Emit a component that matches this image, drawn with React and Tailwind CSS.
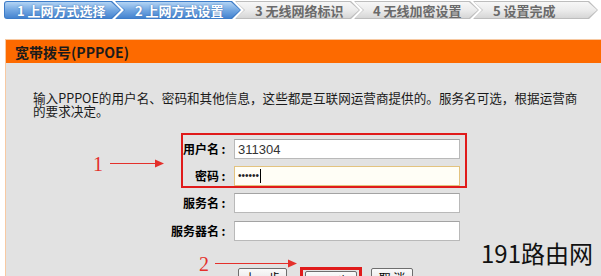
import React from "react";

const SHAPE_FIRST =
  "[clip-path:polygon(0_0,calc(100%_-_9px)_0,100%_50%,calc(100%_-_9px)_100%,0_100%)]";
const SHAPE =
  "[clip-path:polygon(0_0,calc(100%_-_9px)_0,100%_50%,calc(100%_-_9px)_100%,0_100%,9px_50%)]";

function Tab({ label, active, first, w, ml, pl }) {
  const shape = first ? SHAPE_FIRST : SHAPE;
  return (
    <div
      className={`${shape} ${w} ${ml} h-[18px] p-[1px] ${
        active ? "bg-[#3d7cc8]" : "bg-[#bdbdbd]"
      } ${first ? "rounded-l-[3px]" : ""}`}
    >
      <div
        className={`${shape} h-full w-full flex items-center ${pl} ${
          active
            ? "bg-gradient-to-b from-[#b4d4f4] via-[#74a8e2] to-[#4584d0] text-white [text-shadow:0_0_2px_#3a6fb0]"
            : "bg-gradient-to-b from-[#f7f7f7] via-[#ececec] to-[#d6d6d6] text-[#6a6a6a]"
        } ${first ? "rounded-l-[2px]" : ""} text-[13px] font-bold whitespace-nowrap leading-none`}
      >
        {label}
      </div>
    </div>
  );
}

function Field({ children, focus }) {
  return (
    <div
      className={`w-[226px] h-[20px] border flex items-center pl-[3px] ${
        focus
          ? "border-[#e3c37f] bg-[#fffef6]"
          : "border-[#b9b9b9] border-t-[#a3a3a3] bg-white"
      }`}
    >
      {children}
    </div>
  );
}

function Row({ label, children }) {
  return (
    <div className="flex items-center">
      <div className="w-[45px] flex justify-end items-center mr-[6px]">
        <span className="shrink-0 whitespace-nowrap text-[12px] font-bold text-black leading-none">
          {label}
        </span>
        <span className="shrink-0 w-[9px] text-center text-[12px] font-bold text-black leading-none">
          :
        </span>
      </div>
      {children}
    </div>
  );
}

function Btn({ children, w }) {
  return (
    <div
      className={`${w} h-[22px] border border-[#6e6e6e] rounded-[2px] bg-gradient-to-b from-[#fafafa] to-[#dcdcdc] flex justify-center pt-[3px] text-[12px] text-black leading-none`}
    >
      {children}
    </div>
  );
}

export default function App() {
  return (
    <div
      className="relative w-[601px] h-[276px] overflow-hidden bg-white"
      style={{ fontFamily: '"Noto Sans CJK SC", "Liberation Sans", sans-serif' }}
    >
      {/* step bar */}
      <div className="flex pt-[1px] pl-[4px]">
        <Tab label="1 上网方式选择" active first w="w-[117px]" ml="" pl="pl-[12px]" />
        <Tab label="2 上网方式设置" active w="w-[126px]" ml="-ml-[6px]" pl="pl-[19px]" />
        <Tab label="3 无线网络标识" w="w-[125px]" ml="-ml-[6px]" pl="pl-[19px]" />
        <Tab label="4 无线加密设置" w="w-[125px]" ml="-ml-[6px]" pl="pl-[18px]" />
        <Tab label="5 设置完成" w="w-[125px]" ml="-ml-[6px]" pl="pl-[19px]" />
      </div>

      {/* panel */}
      <div className="ml-[5px] mt-[20px] w-[600px] border border-[#f7c9a2] border-r-0">
        <div className="h-[23px] bg-[#fd6a00] flex items-center pl-[9px] text-[14px] font-bold text-[#1b1b1b] leading-none">
          宽带拨号(PPPOE)
        </div>
        <div className="bg-[#e2e2e2] h-[240px] pt-[28px]">
          <p className="pl-[27px] text-[12.6px] leading-[13px] text-[#1a1a1a]">
            输入PPPOE的用户名、密码和其他信息，这些都是互联网运营商提供的。服务名可选，根据运营商
            <br />
            的要求决定。
          </p>

          <div className="ml-[175px] mt-[16px] flex flex-col items-start">
            <div className="border-2 border-[#e01b1b] pt-[4px] pr-[5px] flex flex-col gap-[7px]">
              <Row label="用户名">
                <Field>
                  <span className="text-[13px] text-[#333] leading-none" style={{ fontFamily: '"Liberation Sans", sans-serif' }}>
                    311304
                  </span>
                </Field>
              </Row>
              <Row label="密码">
                <Field focus>
                  <span className="text-[10px] text-[#222] leading-none" style={{ fontFamily: '"Liberation Sans", sans-serif' }}>
                    ••••••
                  </span>
                  <span className="ml-[1px] w-[1px] h-[14px] bg-black" />
                </Field>
              </Row>
            </div>
            <div className="pl-[2px] mt-[5px] flex flex-col gap-[8px]">
              <Row label="服务名">
                <Field />
              </Row>
              <Row label="服务器名">
                <Field />
              </Row>
            </div>
          </div>

          <div className="ml-[232px] mt-[26px] flex items-start">
            <div className="mt-[1px]">
              <Btn w="w-[49px]">上一步</Btn>
            </div>
            <div className="ml-[13px] border-[3px] border-[#e01b1b] pt-[1px] px-[2px]">
              <Btn w="w-[52px]">下一步</Btn>
            </div>
            <div className="ml-[9px] mt-[1px]">
              <Btn w="w-[42px]">取 消</Btn>
            </div>
          </div>
        </div>
      </div>

      {/* annotations */}
      <svg className="absolute left-0 top-0 pointer-events-none" width="601" height="276">
        <line x1="110" y1="163.5" x2="156" y2="163.5" stroke="#e4302b" strokeWidth="1" />
        <polygon points="155,159.5 164,163.5 155,167.5" fill="#e4302b" />
        <line x1="215" y1="263.5" x2="289" y2="263.5" stroke="#e4302b" strokeWidth="1" />
        <polygon points="288,259.5 297,263.5 288,267.5" fill="#e4302b" />
      </svg>
      <div
        className="absolute left-[93px] top-[154px] text-[20px] leading-none text-[#e4302b]"
        style={{ fontFamily: '"Liberation Serif", serif' }}
      >
        1
      </div>
      <div
        className="absolute left-[199px] top-[254px] text-[20px] leading-none text-[#e4302b]"
        style={{ fontFamily: '"Liberation Serif", serif' }}
      >
        2
      </div>
      <div className="absolute left-[481px] top-[241px] text-[24px] leading-none text-[#111]">
        191路由网
      </div>
    </div>
  );
}
